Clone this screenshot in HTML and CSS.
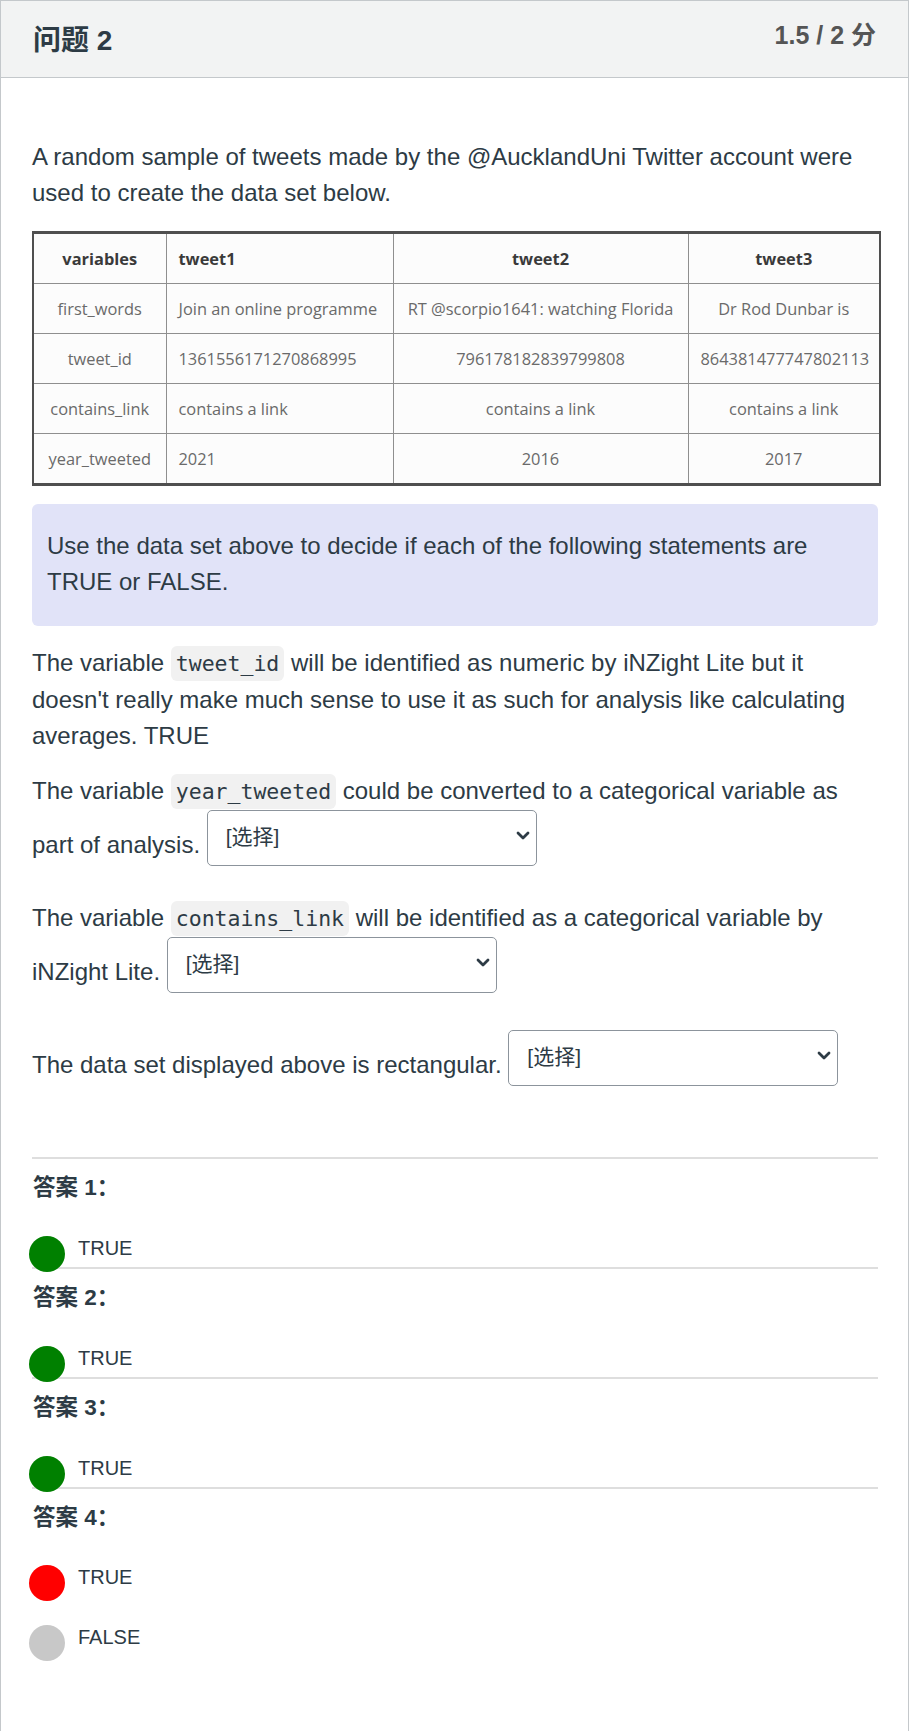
FILE: index.html
```html
<!DOCTYPE html>
<html lang="zh">
<head>
<meta charset="utf-8">
<title>问题 2</title>
<link rel="stylesheet" href="styles.css">
</head>
<body>
<div class="question">
  <div class="question-header">
    <span class="question-name">问题 2</span>
    <span class="question-points">1.5 / 2 分</span>
  </div>
  <div class="question-body">
    <p class="para lead">A random sample of tweets made by the @AucklandUni Twitter account were used to create the data set below.</p>

    <table class="data-table">
      <colgroup>
        <col class="c1"><col class="c2"><col class="c3"><col class="c4">
      </colgroup>
      <thead>
        <tr>
          <th class="center">variables</th>
          <th class="left">tweet1</th>
          <th class="center">tweet2</th>
          <th class="center">tweet3</th>
        </tr>
      </thead>
      <tbody>
        <tr>
          <td class="center">first_words</td>
          <td class="left">Join an online programme</td>
          <td class="center">RT @scorpio1641: watching Florida</td>
          <td class="center">Dr Rod Dunbar is</td>
        </tr>
        <tr>
          <td class="center">tweet_id</td>
          <td class="left">1361556171270868995</td>
          <td class="center">796178182839799808</td>
          <td class="center">864381477747802113</td>
        </tr>
        <tr>
          <td class="center">contains_link</td>
          <td class="left">contains a link</td>
          <td class="center">contains a link</td>
          <td class="center">contains a link</td>
        </tr>
        <tr>
          <td class="center">year_tweeted</td>
          <td class="left">2021</td>
          <td class="center">2016</td>
          <td class="center">2017</td>
        </tr>
      </tbody>
    </table>

    <div class="note">
      <p>Use the data set above to decide if each of the following statements are TRUE or FALSE.</p>
    </div>

    <p class="para">The variable <code class="var">tweet_id</code> will be identified as numeric by iNZight Lite but it doesn't really make much sense to use it as such for analysis like calculating averages. TRUE</p>

    <p class="para">The variable <code class="var">year_tweeted</code> could be converted to a categorical variable as part of analysis. <span class="select-wrap"><select class="answer-select"><option>[选择]</option></select><svg class="chevron" viewBox="0 0 14 9" width="14" height="9"><path d="M2 2 L7 7 L12 2" fill="none" stroke="#2d3b45" stroke-width="2.8" stroke-linecap="round" stroke-linejoin="round"/></svg></span></p>

    <p class="para">The variable <code class="var">contains_link</code> will be identified as a categorical variable by iNZight Lite. <span class="select-wrap"><select class="answer-select"><option>[选择]</option></select><svg class="chevron" viewBox="0 0 14 9" width="14" height="9"><path d="M2 2 L7 7 L12 2" fill="none" stroke="#2d3b45" stroke-width="2.8" stroke-linecap="round" stroke-linejoin="round"/></svg></span></p>

    <p class="para spaced">The data set displayed above is rectangular. <span class="select-wrap"><select class="answer-select"><option>[选择]</option></select><svg class="chevron" viewBox="0 0 14 9" width="14" height="9"><path d="M2 2 L7 7 L12 2" fill="none" stroke="#2d3b45" stroke-width="2.8" stroke-linecap="round" stroke-linejoin="round"/></svg></span></p>

    <div class="answers">
      <div class="answer-group">
        <div class="answer-title">答案 1：</div>
        <div class="answer-option"><span class="dot dot-correct"></span><span class="option-text">TRUE</span></div>
      </div>
      <div class="answer-group">
        <div class="answer-title">答案 2：</div>
        <div class="answer-option"><span class="dot dot-correct"></span><span class="option-text">TRUE</span></div>
      </div>
      <div class="answer-group">
        <div class="answer-title">答案 3：</div>
        <div class="answer-option"><span class="dot dot-correct"></span><span class="option-text">TRUE</span></div>
      </div>
      <div class="answer-group last">
        <div class="answer-title">答案 4：</div>
        <div class="answer-option"><span class="dot dot-wrong"></span><span class="option-text">TRUE</span></div>
        <div class="answer-option"><span class="dot dot-other"></span><span class="option-text">FALSE</span></div>
      </div>
    </div>
  </div>
</div>
</body>
</html>
```

FILE: styles.css
```css
html, body {
  margin: 0;
  padding: 0;
  background: #ffffff;
}

body {
  font-family: "Liberation Sans", Arial, "Noto Sans CJK SC", sans-serif;
  color: #2d3b45;
}

.question {
  box-sizing: border-box;
  width: 909px;
  min-height: 1760px;
  border: 1px solid #c4c8cb;
  border-bottom: none;
}

/* header bar */
.question-header {
  display: flex;
  justify-content: space-between;
  align-items: flex-start;
  height: 76px;
  padding: 0 32px 0 32px;
  background: #f2f3f3;
  border-bottom: 1px solid #c4c8cb;
}

.question-name {
  font-family: "Liberation Sans", Arial, "Noto Sans CJK SC", sans-serif;
  font-size: 28px;
  font-weight: bold;
  line-height: 80px;
  color: #2d3b45;
}

.question-points {
  font-size: 25px;
  font-weight: bold;
  line-height: 30px;
  margin-top: 19px;
  color: #555555;
}

/* body */
.question-body {
  padding: 61px 30px 100px 31px;
}

.para {
  margin: 0 0 19px;
  font-size: 24px;
  line-height: 36px;
}

.para.lead {
  margin-bottom: 20px;
}

.para.spaced {
  margin-top: 22px;
}

.var {
  font-family: "DejaVu Sans Mono", "Liberation Mono", monospace;
  font-size: 21.5px;
  background: #f1f1f1;
  border-radius: 6px;
  padding: 5px 5px;
  color: #2d3b45;
}

/* data table */
.data-table {
  width: 847px;
  table-layout: fixed;
  border-collapse: collapse;
  font-family: "Open Sans", "Noto Sans", sans-serif;
  font-size: 16.4px;
  color: #6a6a6a;
  background: #fcfcfc;
  border-top: 3px solid #4f4f4f;
  border-bottom: 3px solid #4f4f4f;
  border-left: 2px solid #4f4f4f;
  border-right: 2px solid #4f4f4f;
  margin: 0 0 18px;
}

.data-table col.c1 { width: 133px; }
.data-table col.c2 { width: 227px; }
.data-table col.c3 { width: 295px; }
.data-table col.c4 { width: 192px; }

.data-table th,
.data-table td {
  border: 1px solid #8f8f8f;
  padding: 0 12px;
  height: 49px;
  white-space: nowrap;
  overflow: hidden;
}

.data-table th {
  font-weight: bold;
  color: #3a3a3a;
}

.data-table .center { text-align: center; }
.data-table .left { text-align: left; }

/* instruction box */
.note {
  background: #e1e3f8;
  border-radius: 6px;
  padding: 24px 15px 26px;
  margin-bottom: 19px;
}

.note p {
  margin: 0;
  font-size: 24px;
  line-height: 36px;
}

/* dropdowns */
.select-wrap {
  position: relative;
  display: inline-block;
  vertical-align: 9px;
  margin: 0 0 15px;
}

.answer-select {
  -webkit-appearance: none;
  appearance: none;
  box-sizing: border-box;
  width: 330px;
  height: 56px;
  margin: 0;
  padding: 0 40px 4px 18px;
  font-family: "Liberation Sans", Arial, "Noto Sans CJK SC", sans-serif;
  font-size: 21px;
  color: #2d3b45;
  background: #ffffff;
  border: 1px solid #8c949c;
  border-radius: 5px;
}

.chevron {
  position: absolute;
  right: 7px;
  top: 21px;
  pointer-events: none;
}

/* answers */
.answers {
  margin-top: 56px;
}

.answer-group {
  border-top: 2px solid #dedede;
  padding-top: 11px;
}

.answer-title {
  font-family: "Liberation Sans", Arial, "Noto Sans CJK SC", sans-serif;
  font-size: 22.5px;
  font-weight: bold;
  line-height: 36px;
  padding-left: 1px;
}

.answer-option {
  display: flex;
  align-items: flex-start;
  height: 31px;
  margin-top: 30px;
}

.answer-group.last .answer-option {
  margin-top: 29px;
}

.dot {
  flex: none;
  width: 36px;
  height: 36px;
  border-radius: 50%;
  margin-left: -3px;
  margin-right: 13px;
}

.dot-correct { background: #008000; }
.dot-wrong { background: #ff0000; }
.dot-other { background: #c8c8c8; }

.option-text {
  font-size: 20px;
  line-height: 24px;
}
```
